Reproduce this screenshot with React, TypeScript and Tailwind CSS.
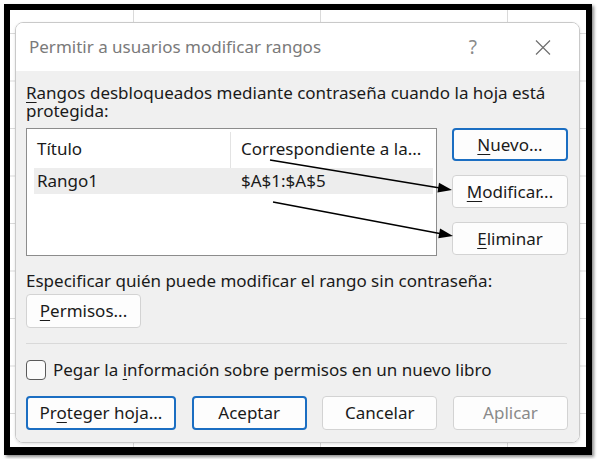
import React from "react";

const Btn = ({
  children,
  primary,
  disabled,
  className = "",
}: {
  children: React.ReactNode;
  primary?: boolean;
  disabled?: boolean;
  className?: string;
}) => (
  <div
    className={
      "flex items-center justify-center rounded-[4px] bg-[#fdfdfd] text-[17px] " +
      (primary ? "border-2 border-[#1b6ec2] " : "border border-[#d3d3d3] ") +
      (disabled ? "text-[#8a8a8a] " : "text-[#1a1a1a] ") +
      className
    }
  >
    {children}
  </div>
);

const U = ({ children }: { children: React.ReactNode }) => (
  <span className="underline underline-offset-[3px]">{children}</span>
);

export default function App() {
  return (
    <div className="relative w-[598px] h-[459px] bg-white font-['Noto_Sans',sans-serif] overflow-hidden">
      <div className="ml-[4px] mt-[4px] w-[588px] h-[451px] border-[6px] border-b-[8px] border-black shadow-[2px_2px_3px_rgba(0,0,0,0.45)]">
        <div className="w-full h-full bg-white bg-[linear-gradient(#dadada_1px,transparent_1px),linear-gradient(90deg,#dadada_1px,transparent_1px)] bg-[size:187px_47.5px] bg-[position:123px_23px] pl-[5px] pt-[12px]">
          {/* dialog */}
          <div className="w-[565px] h-[421px] rounded-[8px] border border-[#c9c9c9] overflow-hidden flex flex-col shadow-[0_1px_3px_rgba(0,0,0,0.12)]">
            <div className="h-[48px] bg-white flex items-center pl-[13px] pr-[28px] shrink-0">
              <span className="text-[17px] text-[#7a7a7a] flex-1">Permitir a usuarios modificar rangos</span>
              <span className="text-[19px] text-[#8a8a8a] mr-[58px]">?</span>
              <svg width="16" height="15" viewBox="0 0 16 15">
                <path d="M1 0.5 L15 14.5 M15 0.5 L1 14.5" stroke="#6f6f6f" strokeWidth="1.2" fill="none" />
              </svg>
            </div>
            <div className="flex-1 bg-[#f0f0f0] pl-[10px] pr-[11px] pt-[13px] text-[#1a1a1a] text-[17px] leading-[18px]">
              <div>
                <U>R</U>angos desbloqueados mediante contraseña cuando la hoja está
                <br />
                protegida:
              </div>
              <div className="flex mt-[8px]">
                <div className="w-[411px] h-[128px] bg-white border border-[#8c8c8c]">
                  <div className="flex h-[39px] items-center">
                    <div className="w-[203px] pl-[10px]">Título</div>
                    <div className="h-[36px] self-end w-px bg-[#e3e3e3]" />
                    <div className="pl-[10px]">Correspondiente a la...</div>
                  </div>
                  <div className="flex h-[26px] items-center bg-[#ededed] ml-[7px] mr-[3px]">
                    <div className="w-[207px] pl-[3px]">Rango1</div>
                    <div>$A$1:$A$5</div>
                  </div>
                </div>
                <div className="ml-[15px] flex flex-col gap-[14px]">
                  <Btn primary className="w-[116px] h-[33px]">
                    <span><U>N</U>uevo...</span>
                  </Btn>
                  <Btn className="w-[116px] h-[33px]">
                    <span><U>M</U>odificar...</span>
                  </Btn>
                  <Btn className="w-[116px] h-[33px]">
                    <span><U>E</U>liminar</span>
                  </Btn>
                </div>
              </div>
              <div className="mt-[16px]">Especificar quién puede modificar el rango sin contraseña:</div>
              <Btn className="mt-[4px] w-[115px] h-[34px]">
                <span><U>P</U>ermisos...</span>
              </Btn>
              <div className="mt-[15px] h-px bg-[#d9d9d9] mr-[1px]" />
              <div className="mt-[16px] flex items-center h-[20px]">
                <div className="w-[20px] h-[20px] rounded-[4px] border border-[#5a5a5a] bg-[#fbfbfb]" />
                <span className="ml-[7px]">Pegar la <U>i</U>nformación sobre permisos en un nuevo libro</span>
              </div>
              <div className="mt-[16px] flex justify-between">
                <Btn primary className="w-[150px] h-[34px]">
                  <span>Pr<U>o</U>teger hoja...</span>
                </Btn>
                <Btn primary className="w-[115px] h-[34px]">Aceptar</Btn>
                <Btn className="w-[115px] h-[34px]">Cancelar</Btn>
                <Btn disabled className="w-[115px] h-[34px]">Aplicar</Btn>
              </div>
            </div>
          </div>
        </div>
      </div>
      {/* annotation arrows */}
      <svg className="absolute left-0 top-0 pointer-events-none" width="598" height="459" viewBox="0 0 598 459">
        <line x1="270" y1="160" x2="440" y2="188" stroke="#000" strokeWidth="1.6" />
        <polygon points="452,190 437.4,192.6 439,182.8" fill="#000" />
        <line x1="273" y1="202" x2="441" y2="233.7" stroke="#000" strokeWidth="1.6" />
        <polygon points="453,236 438.3,238.3 440.1,228.5" fill="#000" />
      </svg>
    </div>
  );
}
